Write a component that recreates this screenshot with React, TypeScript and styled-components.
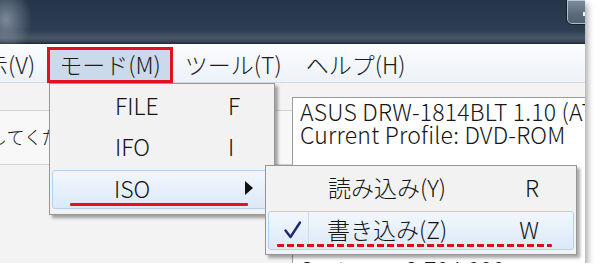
import styled, { createGlobalStyle } from 'styled-components';

const GlobalStyle = createGlobalStyle`
    html, body {
        margin: 0;
        padding: 0;
        background: #ffffff;
        overflow: hidden;
    }
    body {
        font-family: "Noto Sans CJK JP", "Noto Sans", sans-serif;
        font-weight: 300;
        color: #1a1a1a;
    }
`;

const Frame = styled.div`
    position: relative;
    width: 585px;
    height: 263px;
    overflow: hidden;
    background: #f2f2f2;
    box-shadow: 3px 4px 6px rgba(0, 0, 0, 0.32);
    display: flex;
    flex-direction: column;
`;

const TitleBar = styled.div`
    height: 44px;
    flex: none;
    display: flex;
    justify-content: flex-end;
    align-items: flex-start;
    background:
        radial-gradient(ellipse 26px 34px at 6px 20px, rgba(190, 200, 215, 0.55), rgba(190, 200, 215, 0) 100%),
        linear-gradient(180deg, #26364a 0%, #2d3d52 68%, #485667 86%, #3a4757 94%, #1c2634 100%);
`;

const WinButton = styled.div`
    width: 30px;
    height: 26px;
    margin-top: -1px;
    margin-right: -11px;
    box-sizing: border-box;
    border: 1px solid #161e2a;
    border-radius: 0 0 0 6px;
    box-shadow: inset 0 0 0 1px rgba(215, 225, 235, 0.7);
    background: linear-gradient(180deg, #7d8c9d 0%, #5a6a7d 60%, #51616f 100%);
    display: flex;
    align-items: center;
    padding-left: 16px;
`;

const WinGlyph = styled.span`
    width: 5px;
    height: 4px;
    margin-top: 4px;
    background: #f4f6f8;
`;

const MenuBar = styled.div`
    height: 39px;
    flex: none;
    display: flex;
    align-items: flex-end;
    box-sizing: border-box;
    border-top: 1px solid #ffffff;
    border-bottom: 1px solid #d3d9e1;
    background: linear-gradient(180deg, #fbfcfe 0%, #edf2f8 100%);
`;

const MenuItem = styled.div<{ $active?: boolean; $first?: boolean }>`
    height: 36px;
    box-sizing: border-box;
    display: flex;
    align-items: center;
    padding: 0 9px 2px;
    margin-bottom: -1px;
    margin-left: ${p => (p.$first ? '-50px' : '0')};
    border: 3px solid ${p => (p.$active ? '#e4101c' : 'transparent')};
    background: ${p => (p.$active ? '#cbdaea' : 'transparent')};
    font-size: 23px;
    white-space: nowrap;
    color: #1c1c1c;
`;

const Content = styled.div`
    flex: 1;
    display: flex;
    background: #f3f3f3;
`;

const LeftPane = styled.div`
    width: 292px;
    flex: none;
    padding-top: 27px;
    overflow: hidden;
`;

const HintBox = styled.div`
    height: 55px;
    box-sizing: border-box;
    border-top: 1px solid #d2d2d2;
    border-bottom: 1px solid #d2d2d2;
    background: #f8f8f8;
    display: flex;
    align-items: center;
    padding-bottom: 4px;
    font-size: 18px;
    white-space: nowrap;
    text-indent: -47px;
`;

const InfoBox = styled.div`
    flex: 1;
    margin-top: 14px;
    box-sizing: border-box;
    border-top: 1px solid #9c9c9c;
    border-left: 1px solid #9c9c9c;
    background: #ffffff;
    padding: 2px 0 0 7px;
    font-size: 23px;
    line-height: 23px;
    letter-spacing: 0.2px;
    white-space: nowrap;
    color: #161616;
`;

const InfoLine = styled.div<{ $gap?: number }>`
    margin-top: ${p => p.$gap ?? 0}px;
`;

const Menu = styled.div<{ $left: number; $top: number; $width: number; $height: number }>`
    position: absolute;
    left: ${p => p.$left}px;
    top: ${p => p.$top}px;
    width: ${p => p.$width}px;
    height: ${p => p.$height}px;
    box-sizing: border-box;
    border: 1px solid #979797;
    background: #f2f2f2;
    box-shadow: 3px 3px 3px rgba(0, 0, 0, 0.35);
    padding: 2px;
    display: flex;
    flex-direction: column;
`;

const Row = styled.div<{ $hot?: boolean; $pad: number; $label: number }>`
    position: relative;
    height: ${p => (p.$hot ? 39 : 41)}px;
    margin-top: ${p => (p.$hot ? 2 : 0)}px;
    box-sizing: border-box;
    display: grid;
    grid-template-columns: ${p => p.$label}px 1fr;
    align-items: center;
    padding-left: ${p => p.$pad}px;
    padding-bottom: 3px;
    border: 1px solid ${p => (p.$hot ? '#b3d2ef' : 'transparent')};
    border-radius: 3px;
    background: ${p => (p.$hot ? 'linear-gradient(180deg, #f1f7fe 0%, #dde9f7 100%)' : 'transparent')};
    font-size: 23px;
    white-space: nowrap;
    color: #141414;
`;

const Key = styled.span<{ $right?: boolean }>`
    text-align: ${p => (p.$right ? 'right' : 'left')};
    padding-right: ${p => (p.$right ? '34px' : '0')};
`;

const Arrow = styled.span`
    width: 0;
    height: 0;
    margin-left: 18px;
    border-top: 7px solid transparent;
    border-bottom: 7px solid transparent;
    border-left: 8px solid #111111;
`;

const RedLine = styled.span<{ $left: number; $width: number; $dashed?: boolean }>`
    position: absolute;
    left: ${p => p.$left}px;
    top: 32px;
    width: ${p => p.$width}px;
    height: 3px;
    border-radius: 1px;
    background: ${p =>
        p.$dashed
            ? 'repeating-linear-gradient(90deg, #d8101e 0 7px, transparent 7px 10px)'
            : '#e8101a'};
`;

const CheckCell = styled.span`
    position: absolute;
    left: 0;
    top: 0;
    width: 40px;
    height: 100%;
    border-right: 1px solid #cddcec;
    display: flex;
    align-items: center;
    justify-content: center;
    padding-left: 8px;
    padding-bottom: 2px;
    box-sizing: border-box;
`;

const App = () => {
    return (
        <>
            <GlobalStyle />
            <Frame>
                <TitleBar>
                    <WinButton>
                        <WinGlyph />
                    </WinButton>
                </TitleBar>
                <MenuBar>
                    <MenuItem $first>表示(V)</MenuItem>
                    <MenuItem $active>モード(M)</MenuItem>
                    <MenuItem>ツール(T)</MenuItem>
                    <MenuItem>ヘルプ(H)</MenuItem>
                </MenuBar>
                <Content>
                    <LeftPane>
                        <HintBox>選択してください</HintBox>
                    </LeftPane>
                    <InfoBox>
                        <InfoLine>ASUS DRW-1814BLT 1.10 (ATA)</InfoLine>
                        <InfoLine>Current Profile: DVD-ROM</InfoLine>
                        <InfoLine $gap={112}>Sectors:&nbsp;&nbsp;&nbsp;&nbsp;2,704,000</InfoLine>
                    </InfoBox>
                </Content>

                <Menu $left={49} $top={83} $width={226} $height={132}>
                    <Row $pad={62} $label={113}>
                        <span>FILE</span>
                        <Key>F</Key>
                    </Row>
                    <Row $pad={62} $label={113}>
                        <span>IFO</span>
                        <Key>I</Key>
                    </Row>
                    <Row $hot $pad={61} $label={113}>
                        <span>ISO</span>
                        <Arrow />
                        <RedLine $left={17} $width={178} />
                    </Row>
                </Menu>

                <Menu $left={265} $top={165} $width={312} $height={90}>
                    <Row $pad={59} $label={180}>
                        <span>読み込み(Y)</span>
                        <Key $right>R</Key>
                    </Row>
                    <Row $hot $pad={58} $label={180}>
                        <CheckCell>
                            <svg width="19" height="19" viewBox="0 0 19 19">
                                <path
                                    d="M2.5 10.5 L7.5 17 L17 2.5"
                                    fill="none"
                                    stroke="#1b2a72"
                                    strokeWidth="2.4"
                                    strokeLinecap="round"
                                    strokeLinejoin="round"
                                />
                            </svg>
                        </CheckCell>
                        <span>書き込み(Z)</span>
                        <Key $right>W</Key>
                        <RedLine $dashed $left={8} $width={275} />
                    </Row>
                </Menu>
            </Frame>
        </>
    );
};

export default App;
